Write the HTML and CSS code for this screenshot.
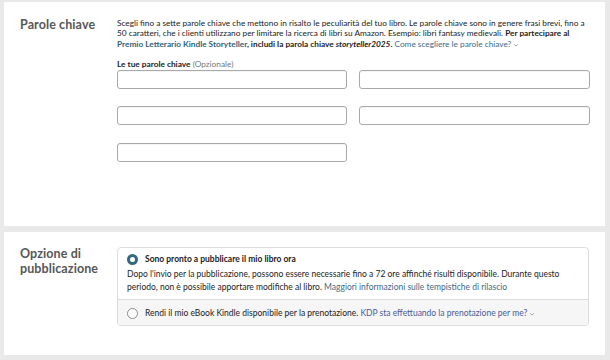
FILE: index.html
```html
<!DOCTYPE html>
<html lang="it">
<head>
<meta charset="utf-8">
<link rel="stylesheet" href="styles.css">
</head>
<body>
<section class="card card-keywords">
  <h2 class="label">Parole chiave</h2>
  <div class="content">
    <p class="intro">Scegli fino a sette parole chiave che mettono in risalto le peculiarità del tuo libro. Le parole chiave sono in genere frasi brevi, fino a 50 caratteri, che i clienti utilizzano per limitare la ricerca di libri su Amazon. Esempio: libri fantasy medievali. <b>Per partecipare al <a class="link strong">Premio Letterario Kindle Storyteller</a>, includi la parola chiave <i>storyteller2025</i>.</b> <a class="link">Come scegliere le parole chiave?<svg class="chev" viewBox="0 0 8 8" width="6" height="6"><path d="M1.5 3 L4 5.5 L6.5 3" fill="none" stroke="currentColor" stroke-width="1"/></svg></a></p>
    <div class="field-label"><b>Le tue parole chiave</b> <span class="opt">(Opzionale)</span></div>
    <div class="inputs">
      <input class="kw" type="text">
      <input class="kw" type="text">
      <input class="kw" type="text">
      <input class="kw" type="text">
      <input class="kw" type="text">
    </div>
  </div>
</section>
<section class="card card-publish">
  <h2 class="label">Opzione di pubblicazione</h2>
  <div class="content">
    <div class="options">
      <div class="option selected">
        <div class="opt-head"><span class="radio on"></span><b>Sono pronto a pubblicare il mio libro ora</b></div>
        <p class="opt-desc">Dopo l'invio per la pubblicazione, possono essere necessarie fino a 72 ore affinché risulti disponibile. Durante questo periodo, non è possibile apportare modifiche al libro. <a class="link">Maggiori informazioni sulle tempistiche di rilascio</a></p>
      </div>
      <div class="option alt">
        <div class="opt-head"><span class="radio"></span><span>Rendi il mio eBook Kindle disponibile per la prenotazione. <a class="link kdp">KDP sta effettuando la prenotazione per me?<svg class="chev" viewBox="0 0 8 8" width="6" height="6"><path d="M1.5 3 L4 5.5 L6.5 3" fill="none" stroke="currentColor" stroke-width="1"/></svg></a></span></div>
      </div>
    </div>
  </div>
</section>
</body>
</html>
```

FILE: styles.css
```css
* { box-sizing: border-box; }
html, body { margin: 0; }
body {
  background: #e9e9e9;
  padding: 2px 5px 0 4px;
  font-family: Lato, "Open Sans", sans-serif;
  color: #222;
  width: 610px;
  height: 360px;
  overflow: hidden;
}
.card {
  background: #fff;
  display: grid;
  grid-template-columns: 97px 1fr;
  padding: 14px 15px 0 16px;
  margin-bottom: 6px;
}
.card-keywords { height: 224px; }
.card-publish { height: 123px; padding-top: 14px; }
.label {
  margin: 0;
  font-size: 12.5px;
  line-height: 15px;
  font-weight: 700;
  color: #575757;
  letter-spacing: 0.1px;
}
.card-keywords .label { margin-top: 1px; }
.card-publish .label { width: 80px; }
.content { min-width: 0; }
.intro {
  margin: 2px 0 0;
  font-size: 8.28px;
  line-height: 10.4px;
  color: #222;
}
.link { color: #3e6a8a; text-decoration: none; }
.link.strong { color: #2f6279; }
.chev { margin-left: 2px; vertical-align: middle; color: #888; }
.field-label {
  margin-top: 10px;
  font-size: 8.3px;
  line-height: 10.5px;
}
.opt { color: #777; }
.inputs {
  margin-top: 0;
  display: grid;
  grid-template-columns: 230px 231px;
  column-gap: 12px;
  row-gap: 17.5px;
}
.kw {
  display: block;
  width: 100%;
  height: 19px;
  margin: 0;
  border: 1px solid #a9a9a9;
  border-radius: 3px;
  background: #fff;
  box-shadow: inset 0 1px 1px rgba(0,0,0,0.05);
}
.options {
  margin-top: 1px;
  width: 472px;
  border: 1px solid #dcdcdc;
  border-radius: 4px;
  overflow: hidden;
  font-size: 8.5px;
}
.option.selected { padding: 5px 9px 6px; }
.option.alt {
  background: #f6f6f6;
  border-top: 1px solid #dcdcdc;
  padding: 7px 9px 7px;
  height: 26px;
}
.opt-head {
  display: flex;
  align-items: center;
  gap: 7px;
  line-height: 12px;
}
.radio {
  width: 11px;
  height: 11px;
  border-radius: 50%;
  border: 1px solid #8a8a8a;
  background: #fff;
  flex: none;
}
.radio.on { border: 3px solid #336a7c; }
.opt-desc {
  margin: 3px 0 0;
  line-height: 12.5px;
}
.kdp { color: #4a5c9a; }
```
